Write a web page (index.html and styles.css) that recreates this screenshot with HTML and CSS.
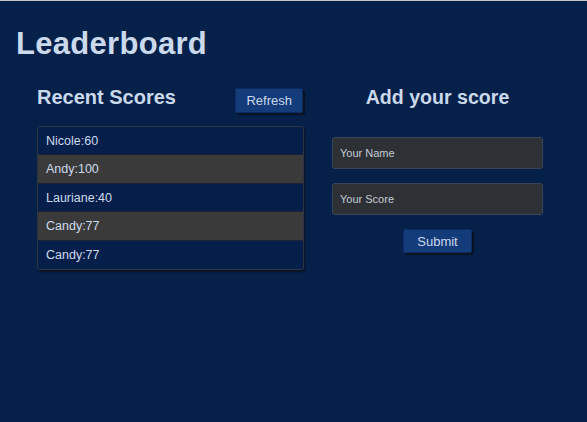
FILE: index.html
```html
<!DOCTYPE html>
<html>
<head>
<meta charset="utf-8">
<link rel="stylesheet" href="styles.css">
</head>
<body>
<h1 class="title">Leaderboard</h1>
<main class="board">
  <section class="col col-scores">
    <div class="scores-head">
      <h2 class="heading">Recent Scores</h2>
      <button class="btn btn-refresh">Refresh</button>
    </div>
    <ul class="list">
      <li class="row">Nicole:60</li>
      <li class="row alt">Andy:100</li>
      <li class="row">Lauriane:40</li>
      <li class="row alt">Candy:77</li>
      <li class="row">Candy:77</li>
    </ul>
  </section>
  <section class="col col-form">
    <h2 class="heading heading-center">Add your score</h2>
    <form class="form">
      <input class="field" type="text" placeholder="Your Name">
      <input class="field" type="text" placeholder="Your Score">
      <button class="btn btn-submit" type="button">Submit</button>
    </form>
  </section>
</main>
</body>
</html>
```
FILE: styles.css
```css
html, body {
  margin: 0;
  padding: 0;
}
body {
  background: #05214a;
  border-top: 1px solid #c8c8c8;
  height: 421px;
  font-family: "Liberation Sans", Arial, sans-serif;
  color: #cddaec;
}
.title {
  margin: 0;
  padding: 24px 0 0 16px;
  font-size: 31px;
  line-height: 37px;
  font-weight: bold;
  letter-spacing: 0.3px;
  color: #cbd9ec;
}
.board {
  display: grid;
  grid-template-columns: 267px 267px;
  padding: 24px 0 0 37px;
}
.scores-head {
  display: flex;
  justify-content: space-between;
  align-items: flex-start;
  height: 40px;
}
.heading {
  margin: 0;
  font-size: 20px;
  line-height: 23px;
  font-weight: bold;
  color: #cbd9ec;
}
.heading-center {
  text-align: center;
  font-size: 19.6px;
}
.btn {
  font-family: "Liberation Sans", Arial, sans-serif;
  font-size: 13px;
  color: #cbd9ec;
  background: #143b7a;
  border: 1px solid #0d2c62;
  border-radius: 2px;
  box-shadow: 2px 2px 1px #0b1222;
  height: 25px;
  padding: 0 10px;
  cursor: pointer;
}
.btn-refresh {
  margin: 2px 1px 0 0;
}
.list {
  list-style: none;
  margin: 0;
  padding: 0;
  border: 1px solid #2e3440;
  border-radius: 3px;
  box-shadow: 1px 2px 2px #0b1222;
  overflow: hidden;
}
.row {
  height: 28.4px;
  line-height: 28.4px;
  padding: 0 8px;
  font-size: 12.5px;
  background: #051f4a;
  color: #cddaec;
  box-sizing: border-box;
  border-bottom: 1px solid #1a2233;
}
.row:last-child {
  border-bottom: none;
}
.row.alt {
  background: #3a3a3a;
}
.form {
  display: flex;
  flex-direction: column;
  align-items: center;
  padding-top: 28px;
}
.field {
  width: 211px;
  height: 32px;
  box-sizing: border-box;
  margin: 0 0 14px 0;
  padding: 0 7px;
  background: #2d3035;
  border: 1px solid #3b4456;
  border-radius: 3px;
  font-family: "Liberation Sans", Arial, sans-serif;
  font-size: 11px;
  color: #c5ccd6;
}
.field::placeholder {
  color: #c5ccd6;
  opacity: 1;
}
.btn-submit {
  margin-top: 0;
  height: 24px;
  padding: 0 13px;
}
```
